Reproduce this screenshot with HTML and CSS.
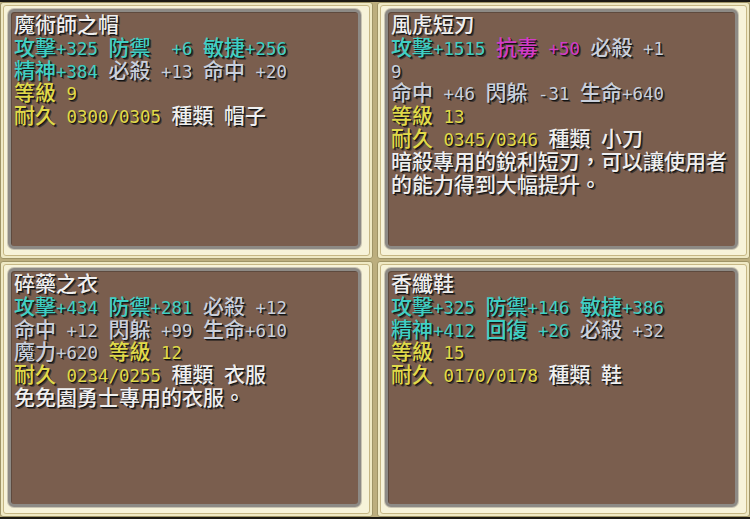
FILE: index.html
```html
<!DOCTYPE html>
<html lang="zh-Hant">
<head>
<meta charset="utf-8">
<title>道具資訊</title>
<link rel="stylesheet" href="styles.css">
</head>
<body>
<main class="board">
  <section class="panel">
    <div class="bevel">
      <div class="well">
        <div class="line name">魔術師之帽</div>
        <div class="line c">攻擊<span class="n">+325 </span>防禦<span class="n">  +6 </span>敏捷<span class="n">+256</span></div>
        <div class="line"><span class="c">精神<span class="n">+384</span></span><span class="n"> </span><span class="g">必殺<span class="n"> +13 </span>命中<span class="n"> +20</span></span></div>
        <div class="line y">等級<span class="n"> 9</span></div>
        <div class="line"><span class="y">耐久<span class="n"> 0300/0305 </span></span><span class="w">種類<span class="n"> </span>帽子</span></div>
      </div>
    </div>
  </section>
  <section class="panel">
    <div class="bevel">
      <div class="well">
        <div class="line name">風虎短刃</div>
        <div class="line"><span class="c">攻擊<span class="n">+1515 </span></span><span class="m">抗毒<span class="n"> +50 </span></span><span class="g">必殺<span class="n"> +1</span></span></div>
        <div class="line g"><span class="n">9</span></div>
        <div class="line g">命中<span class="n"> +46 </span>閃躲<span class="n"> -31 </span>生命<span class="n">+640</span></div>
        <div class="line y">等級<span class="n"> 13</span></div>
        <div class="line"><span class="y">耐久<span class="n"> 0345/0346 </span></span><span class="w">種類<span class="n"> </span>小刀</span></div>
        <div class="line w">暗殺專用的銳利短刃，可以讓使用者</div>
        <div class="line w">的能力得到大幅提升。</div>
      </div>
    </div>
  </section>
  <section class="panel">
    <div class="bevel">
      <div class="well">
        <div class="line name">碎藥之衣</div>
        <div class="line"><span class="c">攻擊<span class="n">+434 </span>防禦<span class="n">+281 </span></span><span class="g">必殺<span class="n"> +12</span></span></div>
        <div class="line g">命中<span class="n"> +12 </span>閃躲<span class="n"> +99 </span>生命<span class="n">+610</span></div>
        <div class="line"><span class="g">魔力<span class="n">+620 </span></span><span class="y">等級<span class="n"> 12</span></span></div>
        <div class="line"><span class="y">耐久<span class="n"> 0234/0255 </span></span><span class="w">種類<span class="n"> </span>衣服</span></div>
        <div class="line w">免免園勇士專用的衣服。</div>
      </div>
    </div>
  </section>
  <section class="panel">
    <div class="bevel">
      <div class="well">
        <div class="line name">香纖鞋</div>
        <div class="line c">攻擊<span class="n">+325 </span>防禦<span class="n">+146 </span>敏捷<span class="n">+386</span></div>
        <div class="line"><span class="c">精神<span class="n">+412 </span>回復<span class="n"> +26 </span></span><span class="g">必殺<span class="n"> +32</span></span></div>
        <div class="line y">等級<span class="n"> 15</span></div>
        <div class="line"><span class="y">耐久<span class="n"> 0170/0178 </span></span><span class="w">種類<span class="n"> </span>鞋</span></div>
      </div>
    </div>
  </section>
</main>
</body>
</html>
```
FILE: styles.css
```css
html, body {
  margin: 0;
  padding: 0;
}
body {
  width: 750px;
  height: 519px;
  background: #1c1a14;
  overflow: hidden;
}
.board {
  display: grid;
  grid-template-columns: 373px 373px;
  grid-template-rows: 257px 256px;
  column-gap: 4px;
  row-gap: 2px;
  margin-top: 2px;
  background: #bcae7e;
}
.panel {
  display: flex;
  background: #efe9c4;
  border: 1px solid #9f9466;
  padding: 2px;
  border-radius: 3px;
  min-height: 0;
}
.bevel {
  flex: 1;
  display: flex;
  background: #f7f3d9;
  border: 1px solid #c6b784;
  border-radius: 3px;
  padding: 4px 8px 6px 4px;
}
.well {
  flex: 1;
  background: #7a5e4e;
  border: 3px solid #8d8a85;
  border-radius: 6px;
  box-shadow: 0 0 0 1px #c9c4b2, inset 1px 1px 0 #5e4a3e;
  padding: 0 0 0 3px;
  margin-top: -1px;
  font-family: "Noto Sans CJK TC", "Noto Sans CJK SC", sans-serif;
  font-size: 21px;
  font-weight: 500;
  line-height: 22.8px;
  text-shadow: 1px 1px 0 #141414, 2px 2px 0 rgba(20, 20, 20, 0.55);
  overflow: hidden;
}
.line {
  height: 22.8px;
  white-space: pre;
}
.n {
  font-family: "DejaVu Sans Mono", monospace;
  font-size: 17.45px;
  font-weight: 400;
}
.name, .w {
  color: #efefef;
}
.c {
  color: #3fcfc4;
}
.g {
  color: #c9d0dc;
}
.y {
  color: #e0da4a;
}
.m {
  color: #d23cc6;
}
```
